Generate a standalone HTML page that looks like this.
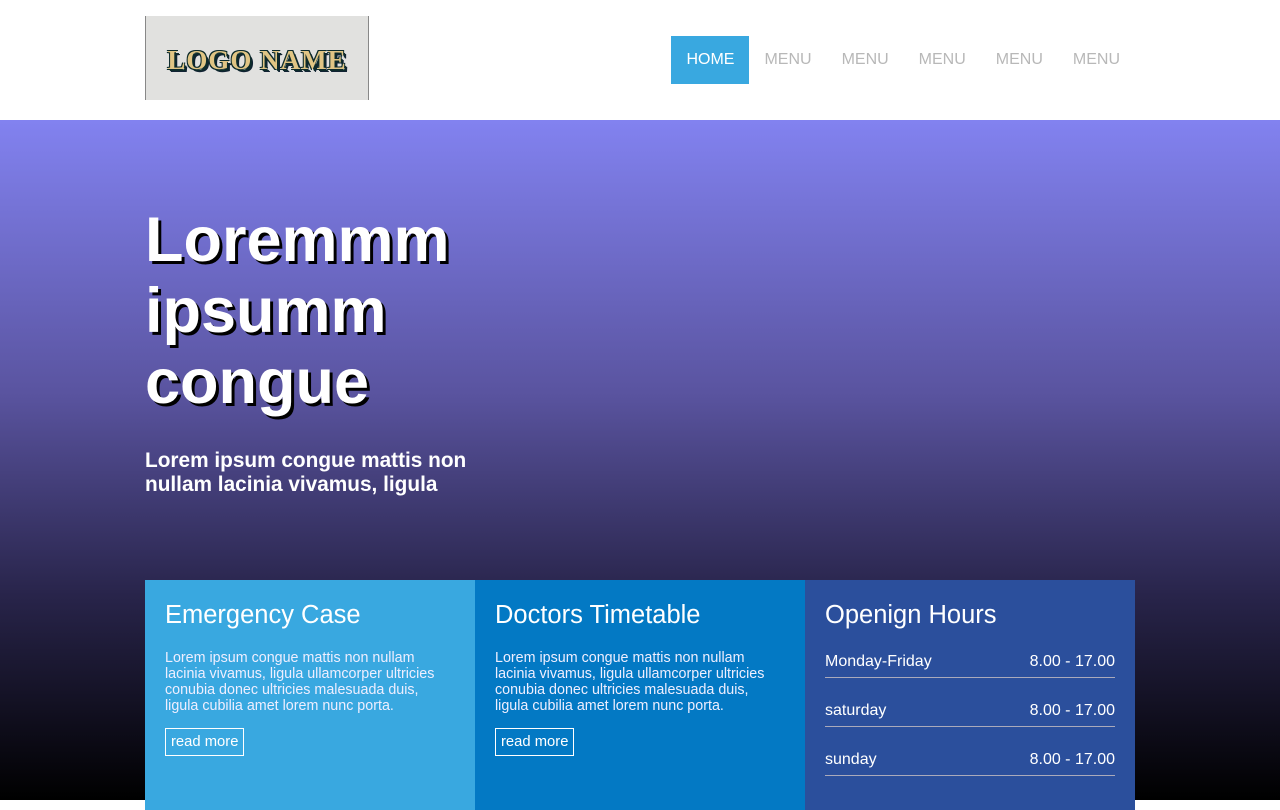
<!DOCTYPE html>
<html><head><style>
*{margin:0;padding:0;box-sizing:border-box}
body{width:1280px;height:800px;overflow:hidden;font-family:"Liberation Sans",sans-serif;background:#fff}
header{height:120px;position:relative}
.logo{position:absolute;left:145px;top:16px;width:224px;height:84px;background:#e1e1df;border-left:1px solid #888;border-right:1px solid #888;display:flex;align-items:center;justify-content:center;font-family:"Liberation Serif",serif;font-weight:bold;font-size:27px;color:#e0c584;letter-spacing:1px;padding-top:4px;text-shadow:-1px -1px 0 #0d2b2b,1px -1px 0 #0d2b2b,-1px 1px 0 #0d2b2b,2px 2px 0 #0d2b2b,3px 3px 0 #123}
nav{position:absolute;right:145px;top:36px;display:flex}
nav a{display:block;height:48px;line-height:48px;padding:0 15px;font-size:16px;color:#b8b8b8;text-decoration:none}
nav a.on{background:#39a8e0;color:#fff}
.hero{position:absolute;top:120px;left:0;width:1280px;height:680px;background:linear-gradient(#8282f0 0%,#5a54a0 40%,#28244a 70%,#000 100%)}
h1{position:absolute;left:145px;top:85px;font-size:63px;line-height:71px;color:#fff;text-shadow:3px 3px 0 #000}
.sub{position:absolute;left:145px;top:329px;font-size:20.8px;line-height:24px;font-weight:bold;color:#fff;width:360px}
.box{position:absolute;top:460px;width:330px;height:230px;padding:20px;color:#fff}
.box h2{font-weight:normal;font-size:25.5px;margin-bottom:20px;line-height:30px}
.box p{font-size:14.3px;line-height:16px;color:#eef}
.btn{display:inline-block;margin-top:14px;border:1px solid #fff;padding:0 5px;font-size:14.8px;line-height:26px}
.row{display:flex;justify-content:space-between;font-size:16px;border-bottom:1px solid #aab;height:38px;line-height:44px;margin-bottom:11px}
.row:first-of-type{margin-top:-10px}
</style></head><body>
<header>
<div class="logo">LOGO NAME</div>
<nav><a class="on">HOME</a><a>MENU</a><a>MENU</a><a>MENU</a><a>MENU</a><a>MENU</a></nav>
</header>
<div class="hero">
<h1>Loremmm<br>ipsumm<br>congue</h1>
<div class="sub">Lorem ipsum congue mattis non nullam lacinia vivamus, ligula</div>
<div class="box" style="left:145px;background:#39a8e0"><h2>Emergency Case</h2><p>Lorem ipsum congue mattis non nullam lacinia vivamus, ligula ullamcorper ultricies conubia donec ultricies malesuada duis, ligula cubilia amet lorem nunc porta.</p><span class="btn">read more</span></div>
<div class="box" style="left:475px;background:#0379c4"><h2>Doctors Timetable</h2><p>Lorem ipsum congue mattis non nullam lacinia vivamus, ligula ullamcorper ultricies conubia donec ultricies malesuada duis, ligula cubilia amet lorem nunc porta.</p><span class="btn">read more</span></div>
<div class="box" style="left:805px;background:#2b4f9c"><h2>Openign Hours</h2>
<div class="row"><span>Monday-Friday</span><span>8.00 - 17.00</span></div>
<div class="row"><span>saturday</span><span>8.00 - 17.00</span></div>
<div class="row"><span>sunday</span><span>8.00 - 17.00</span></div>
</div>
</div>
</body></html>
